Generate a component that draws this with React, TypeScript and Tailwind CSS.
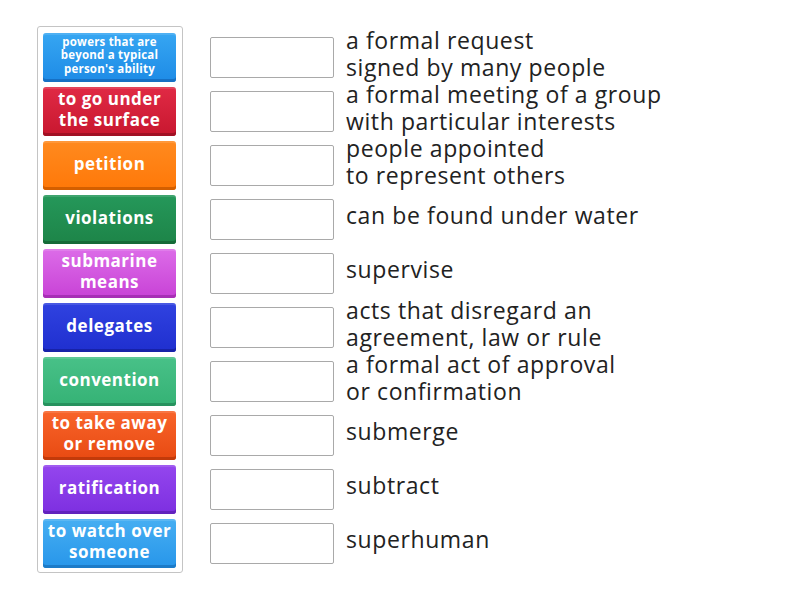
import React from "react";

const tiles: { text: string; from: string; to: string; edge: string; small?: boolean }[] = [
  { text: "powers that are beyond a typical person's ability", from: "#36a6f2", to: "#1e8be6", edge: "#1670c4", small: true },
  { text: "to go under the surface", from: "#e02a45", to: "#c8172f", edge: "#a11024" },
  { text: "petition", from: "#ff8a1f", to: "#ff7808", edge: "#d45f00" },
  { text: "violations", from: "#25985a", to: "#1d8448", edge: "#156a38" },
  { text: "submarine means", from: "#dc6ce8", to: "#c842d6", edge: "#a72fb5" },
  { text: "delegates", from: "#3042e0", to: "#1f2fcf", edge: "#1722a8" },
  { text: "convention", from: "#48c188", to: "#35b275", edge: "#27925e" },
  { text: "to take away or remove", from: "#f8642a", to: "#e84a12", edge: "#c23a0a" },
  { text: "ratification", from: "#9446ee", to: "#7d2fe0", edge: "#6222bd" },
  { text: "to watch over someone", from: "#46aef2", to: "#2796ea", edge: "#1c7bc8" },
];

const answers: string[][] = [
  ["a formal request", "signed by many people"],
  ["a formal meeting of a group", "with particular interests"],
  ["people appointed", "to represent others"],
  ["can be found under water"],
  ["supervise"],
  ["acts that disregard an", "agreement, law or rule"],
  ["a formal act of approval", "or confirmation"],
  ["submerge"],
  ["subtract"],
  ["superhuman"],
];

export default function App() {
  return (
    <div
      className="w-[800px] h-[600px] bg-white flex items-start pl-[37px] pt-[26px]"
      style={{ fontFamily: '"Open Sans", "Noto Sans", sans-serif' }}
    >
      <div className="w-[146px] border border-[#c4c4c4] rounded-[3px] pt-[6px] pb-[4px] pl-[5px] flex flex-col gap-[5px]">
        {tiles.map((t, i) => (
          <div
            key={i}
            className="w-[133px] h-[49px] rounded-[3px] flex items-center justify-center text-center text-white font-bold px-[2px] pb-[5px]"
            style={{
              background: `linear-gradient(to bottom, ${t.from}, ${t.to})`,
              boxShadow: `inset 0 -3px 0 ${t.edge}, inset 0 2px 0 rgba(255,255,255,0.12)`,
            }}
          >
            {t.small ? (
              <span className="text-[11.5px] leading-[13.5px] px-[6px] tracking-[0.2px]">{t.text}</span>
            ) : (
              <span className="text-[17px] leading-[21px] tracking-[0.5px]">{t.text}</span>
            )}
          </div>
        ))}
      </div>
      <div className="ml-[27px] mt-[4px] flex flex-col">
        {answers.map((a, i) => (
          <div key={i} className="h-[54px] flex items-center">
            <div className="w-[124px] h-[41px] border border-[#a9a9a9] rounded-[2px] bg-white shrink-0" />
            <div className="ml-[12px] text-[23px] leading-[27px] tracking-[0.6px] text-[#222] -mt-[7px]">
              {a.map((l, j) => (
                <div key={j}>{l}</div>
              ))}
            </div>
          </div>
        ))}
      </div>
    </div>
  );
}
